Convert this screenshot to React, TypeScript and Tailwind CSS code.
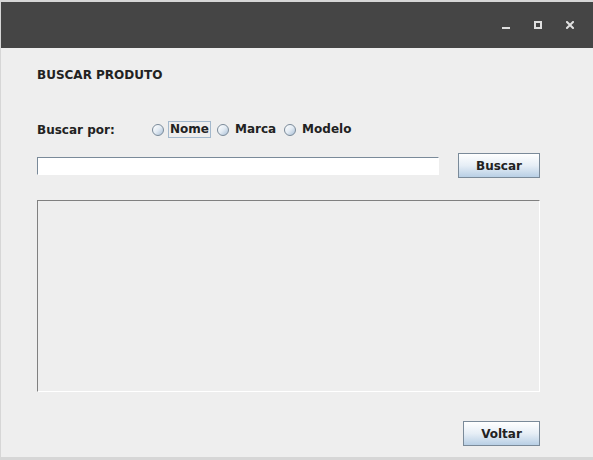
import React from 'react'

const font = { fontFamily: '"DejaVu Sans", "Liberation Sans", sans-serif' }

function Radio({ label, focused }: { label: string; focused?: boolean }) {
  return (
    <div className="flex items-center">
      <span className="w-[12px] h-[12px] rounded-full border border-[#7a8a99] bg-linear-to-br from-white via-[#e3ebf3] to-[#a9bfd6]" />
      <span
        className={
          'ml-[4px] px-[1px] border text-[12px] leading-[15px] font-bold text-[#222] ' +
          (focused ? 'border-[#a3b8cc]' : 'border-transparent')
        }
      >
        {label}
      </span>
    </div>
  )
}

function JButton({ label, width }: { label: string; width: string }) {
  return (
    <button
      type="button"
      className={
        'h-[25px] border border-[#7a8a99] bg-linear-to-b from-white via-[#e6eef6] to-[#b8cfe5] text-[12px] font-bold text-[#222] leading-none ' +
        width
      }
    >
      {label}
    </button>
  )
}

export default function App() {
  return (
    <div className="w-[593px] h-[460px] bg-[#d6d6d6] pt-[2px] pl-[1px] overflow-hidden" style={font}>
      <div className="w-[592px] h-[455px] flex flex-col">
        {/* title bar */}
        <div className="h-[46px] shrink-0 bg-[#454545] flex items-center justify-end pr-[19px] gap-[24px]">
          <div className="w-[8px] h-[8px] flex items-end">
            <div className="w-[8px] h-[2px] bg-[#e0e0e0]" />
          </div>
          <div className="w-[8px] h-[8px] border-2 border-[#e0e0e0]" />
          <svg width="8" height="8" viewBox="0 0 8 8">
            <path d="M1 1L7 7M7 1L1 7" stroke="#e0e0e0" strokeWidth="2" strokeLinecap="square" />
          </svg>
        </div>

        {/* body */}
        <div className="flex-1 bg-[#eeeeee] pl-[36px] pr-[53px] flex flex-col">
          <div className="mt-[20px] text-[12px] leading-[14px] font-bold text-[#222]">BUSCAR PRODUTO</div>

          <div className="mt-[39px] h-[17px] flex items-center">
            <span className="w-[115px] text-[12px] leading-[14px] font-bold text-[#222]">Buscar por:</span>
            <div className="flex items-center gap-[6px]">
              <Radio label="Nome" focused />
              <Radio label="Marca" />
              <Radio label="Modelo" />
            </div>
          </div>

          <div className="mt-[15px] h-[25px] flex items-center">
            <div className="w-[402px] h-[18px] bg-white border-t border-l border-[#7a8a99] border-b border-r border-b-white border-r-white" />
            <div className="ml-[19px]">
              <JButton label="Buscar" width="w-[82px]" />
            </div>
          </div>

          <div className="mt-[22px] w-[503px] h-[192px] border-t border-l border-[#808080] border-b border-r border-b-white border-r-white bg-[#eeeeee]" />

          <div className="mt-[29px] flex justify-end">
            <JButton label="Voltar" width="w-[77px]" />
          </div>
        </div>
      </div>
    </div>
  )
}
